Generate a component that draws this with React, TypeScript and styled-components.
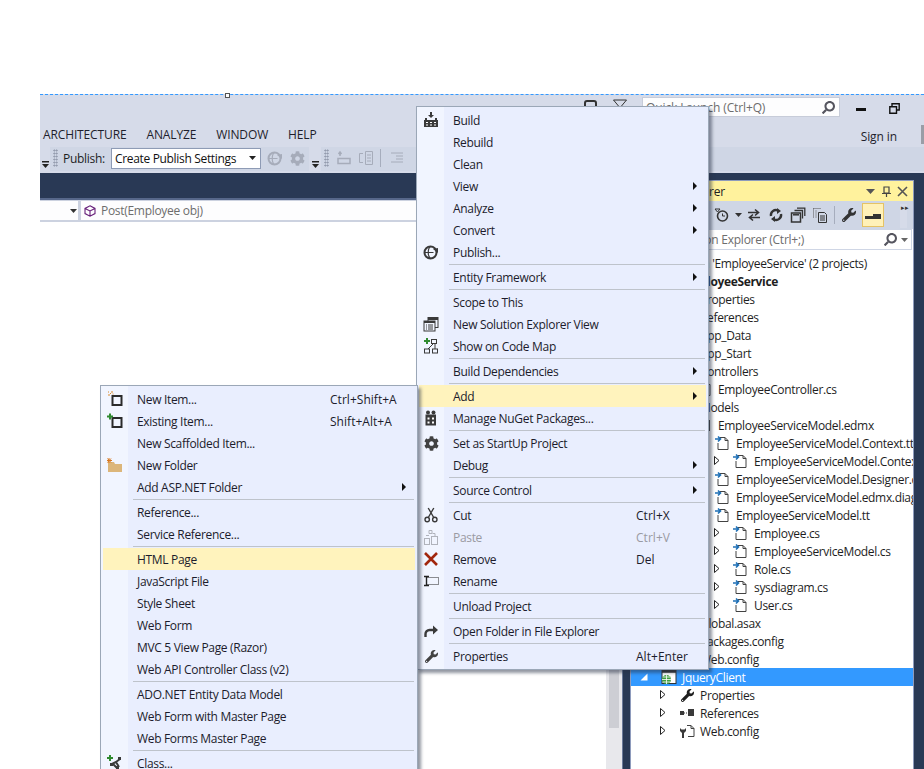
import React from "react";
import styled, { createGlobalStyle } from "styled-components";
import { FaCog, FaWrench, FaSearch } from "react-icons/fa";

const Global = createGlobalStyle`
  html, body { margin: 0; padding: 0; background: #fff; }
  body { font-family: "Open Sans", "Noto Sans", sans-serif; font-size: 12px; color: #1e1e1e; }
`;

const Page = styled.div`
  position: relative;
  width: 924px;
  height: 769px;
  overflow: hidden;
  padding-top: 94px;
  box-sizing: border-box;
`;
const Ide = styled.div`
  position: relative;
  margin-left: 40px;
  height: 674px;
  background: #d6dbe9;
  border-top: 1px dashed #3399ff;
  display: flex;
  flex-direction: column;
`;
const Handle = styled.span`
  position: absolute;
  left: 185px;
  top: -2px;
  width: 3px;
  height: 3px;
  background: #fff;
  border: 1px solid #555;
`;
const TitleRow = styled.div`
  height: 30px;
  display: flex;
  justify-content: flex-end;
  align-items: flex-start;
  padding: 2px 24px 0 0;
  box-sizing: border-box;
  flex: none;
`;
const BellGlyph = styled.span`
  width: 13px;
  height: 12px;
  margin: 3px 16px 0 0;
  box-sizing: border-box;
  border: 2px solid #333;
  border-radius: 3px;
`;
const FilterGlyph = styled.svg`
  width: 14px;
  height: 14px;
  margin: 2px 15px 0 0;
`;
const QuickSearch = styled.div`
  width: 198px;
  height: 20px;
  box-sizing: border-box;
  background: #fdfdfe;
  border: 1px solid #c7ccd9;
  color: #6d6d6d;
  display: flex;
  align-items: center;
  justify-content: space-between;
  padding: 0 4px 0 3px;
  letter-spacing: -0.12px;
`;
const MinGlyph = styled.span`
  width: 10px;
  height: 3px;
  margin: 11px 0 0 16px;
  background: #111;
`;
const RestoreGlyph = styled.svg`
  width: 11px;
  height: 11px;
  margin: 6px 0 0 23px;
`;
const MenuBar = styled.div`
  height: 22px;
  flex: none;
  display: flex;
  align-items: center;
  gap: 20px;
  padding-left: 3px;
  letter-spacing: -0.13px;
  color: #1e1e2c;
`;
const MenuTitle = styled.span`
  margin-bottom: 4px;
`;
const SignIn = styled.span`
  margin-left: auto;
  margin-right: 27px;
  letter-spacing: -0.1px;
`;
const Avatar = styled.span`
  position: absolute;
  right: 0;
  top: 30px;
  width: 3px;
  height: 19px;
  background: #9a9da6;
`;
const ToolBar = styled.div`
  height: 26px;
  flex: none;
  display: flex;
  align-items: flex-start;
`;
const Segment = styled.div<{ $w?: number }>`
  height: 24px;
  box-sizing: border-box;
  padding-bottom: 2px;
  background: #cfd6e5;
  display: flex;
  align-items: center;
  flex: ${(p) => (p.$w ? `0 0 ${p.$w}px` : "1")};
`;
const Overflow = styled.span<{ $w: number }>`
  flex: 0 0 ${(p) => p.$w}px;
  height: 24px;
  display: flex;
  justify-content: center;
  align-items: flex-end;
  padding-bottom: 3px;
  box-sizing: border-box;
`;
const Grip = styled.span`
  flex: none;
  width: 5px;
  height: 18px;
  margin: 0 4px 0 3px;
  background-image: radial-gradient(#8d95a8 0.8px, transparent 0.9px);
  background-size: 2.5px 3px;
`;
const PublishLabel = styled.span`
  margin: 0 6px 0 1px;
  width: 42px;
  white-space: nowrap;
  letter-spacing: -0.3px;
`;
const Combo = styled.div`
  width: 150px;
  height: 21px;
  margin-right: 3px;
  box-sizing: border-box;
  background: #fff;
  border: 1px solid #8e9bb5;
  display: flex;
  align-items: center;
  justify-content: space-between;
  padding: 0 4px 0 3px;
  color: #111;
  letter-spacing: -0.33px;
  white-space: nowrap;
`;
const ToolIcon = styled.span<{ $w?: number; $c?: string }>`
  flex: none;
  width: ${(p) => p.$w ?? 22}px;
  height: 22px;
  display: flex;
  align-items: center;
  justify-content: center;
  color: ${(p) => p.$c ?? "#424242"};
`;
const ToolSep = styled.span`
  flex: none;
  width: 1px;
  height: 18px;
  margin: 0 3px;
  background: #a6adbd;
`;
const Main = styled.div`
  flex: 1;
  min-height: 0;
  display: flex;
  background: #293955;
`;
const EditorColumn = styled.div`
  width: 583px;
  padding-top: 25px;
  display: flex;
  flex-direction: column;
  box-sizing: border-box;
  border-right: 1px solid #6b7a9a;
`;
const NavBar = styled.div`
  flex: none;
  height: 24px;
  box-sizing: border-box;
  border-top: 2px solid #56678a;
  padding: 1px 0 2px;
  background: #ccd2e0;
  display: flex;
  gap: 3px;
`;
const NavBox = styled.div<{ $w?: number }>`
  flex: ${(p) => (p.$w ? `0 0 ${p.$w}px` : "1")};
  background: #fdfdfe;
  display: flex;
  align-items: center;
  color: #6d6d6d;
  letter-spacing: -0.3px;
  justify-content: ${(p) => (p.$w ? "flex-end" : "flex-start")};
  padding: ${(p) => (p.$w ? "0 1px 0 0" : "0 0 0 3px")};
  box-sizing: border-box;
`;
const NavGlyph = styled.svg`
  width: 12px;
  height: 12px;
  margin-right: 5px;
`;
const Editor = styled.div`
  flex: 1;
  display: flex;
  background: #fff;
`;
const EditorArea = styled.div`
  flex: 1;
`;
const ScrollTrack = styled.div`
  flex: 0 0 16px;
  background: #e8e8ec;
  padding: 0 3px;
  box-sizing: border-box;
`;
const ScrollThumb = styled.div`
  height: 506px;
  background: #cdced4;
`;
const Panel = styled.div`
  width: 284px;
  margin: 7px 0 0 7px;
  box-sizing: border-box;
  background: #fff;
  border: solid #8e9bbc;
  border-width: 0 1px;
  display: flex;
  flex-direction: column;
  overflow: hidden;
`;
const PanelTitle = styled.div`
  flex: none;
  height: 21px;
  box-sizing: border-box;
  background: #fff29d;
  border-top: 1px solid #8e9bbc;
  display: flex;
  align-items: center;
  padding-left: 5px;
  letter-spacing: -0.2px;
  color: #1e1e1e;
`;
const TitleText = styled.span`
  flex: 1;
  text-indent: -4px;
  white-space: nowrap;
`;
const TitleGlyph = styled.svg`
  width: 11px;
  height: 11px;
  margin-right: 5px;
  flex: none;
`;
const PanelTools = styled.div`
  flex: none;
  height: 28px;
  background: #cfd6e5;
  display: flex;
  align-items: center;
  padding-left: 80px;
`;
const ActiveTool = styled.span`
  flex: none;
  width: 22px;
  height: 24px;
  margin-left: 2px;
  box-sizing: border-box;
  background: #fff1b8;
  border: 1px solid #e5c365;
  display: flex;
  align-items: center;
  justify-content: center;
`;
const MoreDots = styled.span`
  margin-left: auto;
  align-self: flex-start;
  margin-top: 3px;
  margin-right: 6px;
  font-size: 7px;
  line-height: 8px;
  color: #333;
  background: #d6dbe9;
  padding: 0 1px;
  width: 7px;
  height: 24px;
  box-sizing: border-box;
`;
const PanelSearch = styled.div`
  flex: none;
  height: 21px;
  box-sizing: border-box;
  margin-right: 1px;
  border: 1px solid #cfd6e5;
  display: flex;
  align-items: center;
  color: #6d6d6d;
  padding: 0 3px 0 3px;
  letter-spacing: -0.25px;
  white-space: nowrap;
`;
const PanelSearchText = styled.span`
  flex: 1;
`;
const SearchGap = styled.span`
  width: 4px;
`;
const MirrorSearch = styled(FaSearch)`
  transform: scaleX(-1);
  color: #55555f;
`;
const Tree = styled.div`
  flex: 1;
  padding-top: 4px;
`;
const TreeRow = styled.div<{ $pad: number; $sel?: boolean; $bold?: boolean }>`
  height: 18px;
  box-sizing: border-box;
  display: flex;
  align-items: center;
  white-space: nowrap;
  padding-left: ${(p) => p.$pad}px;
  background: ${(p) => (p.$sel ? "#3399ff" : "transparent")};
  color: ${(p) => (p.$sel ? "#fff" : "#1e1e1e")};
  font-weight: ${(p) => (p.$bold ? 700 : 400)};
  letter-spacing: -0.34px;
`;
const Expander = styled.span`
  flex: none;
  width: 24px;
  height: 18px;
  display: flex;
  align-items: center;
`;
const TreeIcon = styled.span`
  flex: none;
  width: 16px;
  height: 16px;
  margin-right: 5px;
  display: flex;
  align-items: center;
  justify-content: center;
`;

const MenuBox = styled.div<{ $x: number; $y: number; $w: number; $z: number }>`
  position: absolute;
  left: ${(p) => p.$x}px;
  top: ${(p) => p.$y}px;
  width: ${(p) => p.$w}px;
  z-index: ${(p) => p.$z};
  box-sizing: border-box;
  padding: 2px;
  border: 1px solid #9ba7b7;
  background: linear-gradient(to right, #f1f5ff 27px, #e9eefe 27px);
  box-shadow: 3px 3px 3px rgba(40, 50, 70, 0.5);
  color: #1c1c2c;
  letter-spacing: -0.32px;
`;
const MenuRow = styled.div<{ $active?: boolean; $off?: boolean; $short: number }>`
  height: 22px;
  display: grid;
  grid-template-columns: 34px ${(p) => p.$short - 34}px 1fr 13px;
  align-items: center;
  white-space: nowrap;
  background: ${(p) => (p.$active ? "#fff3bd" : "transparent")};
  color: ${(p) => (p.$off ? "#9a9aa2" : "inherit")};
`;
const MenuIcon = styled.span`
  width: 16px;
  height: 16px;
  margin-left: 4px;
  display: flex;
  align-items: center;
  justify-content: center;
  color: #424242;
`;
const Shortcut = styled.span`
  letter-spacing: 0.03px;
`;
const MenuSep = styled.div`
  height: 1px;
  margin: 1px 1px 1px 30px;
  background: #bec3cb;
`;
const Caret = styled.span`
  width: 0;
  height: 0;
  border-left: 4px solid #111;
  border-top: 4px solid transparent;
  border-bottom: 4px solid transparent;
  justify-self: start;
`;

const S16: React.FC<{ children: React.ReactNode }> = ({ children }) => (
  <svg width="16" height="16" viewBox="0 0 16 16" fill="none">{children}</svg>
);

const D = "#3a3a3a";
const icons: Record<string, React.ReactNode> = {
  build: (
    <S16>
      <path d="M8 0v5" stroke={D} strokeWidth="2" />
      <path d="M5 3l3 3 3-3z" fill={D} />
      <path d="M2 6h2v2h8V6h2v2h1v7H1V8h1z" fill={D} />
      <path d="M3 10h2v1H3zM7 10h2v1H7zM11 10h2v1h-2zM3 12.5h2v1H3zM7 12.5h2v1H7zM11 12.5h2v1h-2z" fill="#fff" />
    </S16>
  ),
  publish: (
    <S16>
      <circle cx="7.5" cy="8.5" r="6" stroke={D} strokeWidth="2" />
      <path d="M1.5 8.5h9M7.5 2.5c-3 2-3 10 0 12" stroke={D} strokeWidth="1.2" />
      <path d="M10 5l5-1v5z" fill={D} />
    </S16>
  ),
  view: (
    <S16>
      <rect x="5" y="1.5" width="10" height="10" stroke={D} />
      <path d="M5 3h10" stroke={D} strokeWidth="2" />
      <rect x="1" y="5" width="11" height="10" fill="#f1f5ff" stroke={D} />
      <path d="M1 6h11" stroke={D} strokeWidth="2" />
      <path d="M3 9h1M5 9h5M3 11h1M5 11h5M3 13h1M5 13h5" stroke={D} />
    </S16>
  ),
  map: (
    <S16>
      <path d="M1 3h6M4 0v6" stroke="#2f8a2f" strokeWidth="2" />
      <rect x="8.5" y="1.5" width="5" height="4" stroke={D} />
      <rect x="1.5" y="11" width="5" height="4" stroke={D} />
      <rect x="9.5" y="11" width="5" height="4" stroke={D} />
      <path d="M10 6l-5 5M12 6v5" stroke={D} />
    </S16>
  ),
  nuget: (
    <S16>
      <circle cx="5" cy="2.5" r="2" fill={D} />
      <circle cx="10.5" cy="2.5" r="2" fill={D} />
      <rect x="2.5" y="4.5" width="10.5" height="11" fill={D} />
      <path d="M4.5 7.5h2v2h-2zM9 7.5h2v2H9zM4.5 11.5h2v2h-2zM9 11.5h2v2H9z" fill="#fff" />
    </S16>
  ),
  gear: <FaCog size={15} />,
  cut: (
    <S16>
      <circle cx="4.2" cy="12.5" r="2.2" stroke={D} strokeWidth="1.4" />
      <circle cx="11.8" cy="12.5" r="2.2" stroke={D} strokeWidth="1.4" />
      <path d="M5.3 10.5 10.8 1M10.7 10.5 5.2 1" stroke={D} strokeWidth="1.4" />
    </S16>
  ),
  paste: (
    <S16>
      <path d="M3 6.5h3M6 1.5h3v3H6zM9.5 4.5H12v3" stroke="#b0b3bb" />
      <rect x="1.5" y="9.5" width="5" height="6" stroke="#b0b3bb" />
      <rect x="8.5" y="7.5" width="6" height="8" stroke="#b0b3bb" />
    </S16>
  ),
  remove: (
    <S16>
      <path d="M2 2l12 12M14 2 2 14" stroke="#a1260d" strokeWidth="2.6" />
    </S16>
  ),
  rename: (
    <S16>
      <rect x="3.5" y="4.5" width="12" height="7" stroke="#222" strokeDasharray="1 1" />
      <path d="M1 3.5h5M1 12.5h5M3.5 3.5v9" stroke="#222" strokeWidth="1.4" />
    </S16>
  ),
  open: (
    <S16>
      <path d="M2.5 14v-3a4 4 0 0 1 4-4H11" stroke={D} strokeWidth="2.4" />
      <path d="M10 2.5 15 7l-5 4.5z" fill={D} />
    </S16>
  ),
  wrench: <FaWrench size={13} />,
  newItem: (
    <S16>
      <rect x="5.5" y="5" width="9" height="9" stroke="#2b2b2b" strokeWidth="2" />
      <path d="M1 1h1M4 1h2M1 4h2M3 2.5h1M5.5 3h1" stroke="#d98a2b" strokeWidth="1.2" />
    </S16>
  ),
  existing: (
    <S16>
      <rect x="5.5" y="5" width="9" height="9" stroke="#2b2b2b" strokeWidth="2" />
      <path d="M0 3.5h6M3 .5v6" stroke="#2f8a2f" strokeWidth="2" />
    </S16>
  ),
  newFolder: (
    <S16>
      <path d="M1 5h6l1 2h7v8H1z" fill="#dcb67a" />
      <path d="M2 1v5M0 3.5h5M.5 1.5l3.5 4M4 1.5.5 5.5" stroke="#d9781f" strokeWidth="1" />
    </S16>
  ),
  classItem: (
    <S16>
      <path d="M0 3h6M3 0v6" stroke="#2f8a2f" strokeWidth="2" />
      <path d="M5 9l4-2 4-3M6 9l4 4M9 7l3 5" stroke={D} strokeWidth="2" />
      <path d="M3 8h3v3H3zM11 2h3v3h-3zM9 11h3v3H9z" fill={D} />
    </S16>
  ),
  file: (
    <S16>
      <path d="M5 2.5h5l3 3v9H3V8" fill="#fff" stroke="#424242" />
      <path d="M10 2.5v3h3" stroke="#424242" />
      <path d="M0 4h5M3 1.5 5.5 4 3 6.5" stroke="#1e6fb5" strokeWidth="1.6" />
    </S16>
  ),
  cs: (
    <S16>
      <path d="M3 3l3 3M3 6l3-3M4.5 1.5v6M2.5 4.5h5" stroke="#3d7a3d" />
      <path d="M4 8v6.5h9v-11H8" stroke="#424242" />
    </S16>
  ),
  edmx: (
    <S16>
      <path d="M3 3h10v11H3z" fill="#424242" />
      <path d="M5 1h6v3H5z" fill="#424242" />
      <path d="M5 6h6v1H5z" fill="#bbb" />
    </S16>
  ),
  folder: (
    <S16>
      <path d="M1 3h6l1 2h7v9H1z" fill="#dcb67a" />
    </S16>
  ),
  web: (
    <S16>
      <rect x="1" y="1.5" width="14" height="13" fill="#fff" stroke="#333" />
      <path d="M1 2.5h14" stroke="#333" strokeWidth="2.5" />
      <circle cx="5.5" cy="10.5" r="4.5" fill="#3f9d3f" />
      <path d="M1 10.5h9M5.5 6v9M2 8h7M2 13h7" stroke="#fff" strokeWidth=".8" />
    </S16>
  ),
  refs: (
    <S16>
      <rect x="1" y="6" width="4" height="4" fill={D} />
      <rect x="9" y="4" width="6" height="7" fill={D} />
      <path d="M5 8h4" stroke={D} strokeDasharray="1 1" />
    </S16>
  ),
  config: (
    <S16>
      <path d="M8 2.5h4l3 3v8H9" fill="#fff" stroke="#424242" />
      <path d="M12 2.5v3h3" stroke="#424242" />
      <path d="M1 5v3l2 2v5h2v-5l2-2V5L5.5 6.5h-3z" fill={D} />
    </S16>
  ),
};

type M = { t?: string; i?: string; s?: string; sub?: boolean; active?: boolean; off?: boolean; sep?: boolean };

const Menu: React.FC<{ x: number; y: number; w: number; z: number; short: number; items: M[] }> = ({ x, y, w, z, short, items }) => (
  <MenuBox $x={x} $y={y} $w={w} $z={z}>
    {items.map((m, k) =>
      m.sep ? (
        <MenuSep key={k} />
      ) : (
        <MenuRow key={k} $active={m.active} $off={m.off} $short={short}>
          <MenuIcon>{m.i ? icons[m.i] : null}</MenuIcon>
          <span>{m.t}</span>
          <Shortcut>{m.s}</Shortcut>
          {m.sub ? <Caret /> : <span />}
        </MenuRow>
      )
    )}
  </MenuBox>
);

const rightMenu: M[] = [
  { t: "Build", i: "build" }, { t: "Rebuild" }, { t: "Clean" },
  { t: "View", sub: true }, { t: "Analyze", sub: true }, { t: "Convert", sub: true },
  { t: "Publish...", i: "publish" }, { sep: true },
  { t: "Entity Framework", sub: true }, { sep: true },
  { t: "Scope to This" }, { t: "New Solution Explorer View", i: "view" }, { t: "Show on Code Map", i: "map" }, { sep: true },
  { t: "Build Dependencies", sub: true }, { sep: true },
  { t: "Add", sub: true, active: true }, { t: "Manage NuGet Packages...", i: "nuget" }, { sep: true },
  { t: "Set as StartUp Project", i: "gear" }, { t: "Debug", sub: true }, { sep: true },
  { t: "Source Control", sub: true }, { sep: true },
  { t: "Cut", i: "cut", s: "Ctrl+X" }, { t: "Paste", i: "paste", s: "Ctrl+V", off: true }, { t: "Remove", i: "remove", s: "Del" }, { t: "Rename", i: "rename" }, { sep: true },
  { t: "Unload Project" }, { sep: true },
  { t: "Open Folder in File Explorer", i: "open" }, { sep: true },
  { t: "Properties", i: "wrench", s: "Alt+Enter" },
];

const leftMenu: M[] = [
  { t: "New Item...", i: "newItem", s: "Ctrl+Shift+A" }, { t: "Existing Item...", i: "existing", s: "Shift+Alt+A" },
  { t: "New Scaffolded Item..." }, { t: "New Folder", i: "newFolder" }, { t: "Add ASP.NET Folder", sub: true }, { sep: true },
  { t: "Reference..." }, { t: "Service Reference..." }, { sep: true },
  { t: "HTML Page", active: true }, { t: "JavaScript File" }, { t: "Style Sheet" }, { t: "Web Form" },
  { t: "MVC 5 View Page (Razor)" }, { t: "Web API Controller Class (v2)" }, { sep: true },
  { t: "ADO.NET Entity Data Model" }, { t: "Web Form with Master Page" }, { t: "Web Forms Master Page" }, { sep: true },
  { t: "Class...", i: "classItem" },
];

type R = { t: string; d: number; i?: string; e?: "open" | "closed" };
const tree: R[] = [
  { t: "EmployeeService", d: 0, i: "web", e: "open" },
  { t: "Properties", d: 1, i: "wrench", e: "closed" },
  { t: "References", d: 1, i: "refs", e: "closed" },
  { t: "App_Data", d: 1, i: "folder" },
  { t: "App_Start", d: 1, i: "folder", e: "closed" },
  { t: "Controllers", d: 1, i: "folder", e: "open" },
  { t: "EmployeeController.cs", d: 2, i: "cs", e: "closed" },
  { t: "Models", d: 1, i: "folder", e: "open" },
  { t: "EmployeeServiceModel.edmx", d: 2, i: "edmx", e: "open" },
  { t: "EmployeeServiceModel.Context.tt", d: 3, i: "file", e: "open" },
  { t: "EmployeeServiceModel.Context.cs", d: 4, i: "file", e: "closed" },
  { t: "EmployeeServiceModel.Designer.cs", d: 3, i: "file" },
  { t: "EmployeeServiceModel.edmx.diagram", d: 3, i: "file" },
  { t: "EmployeeServiceModel.tt", d: 3, i: "file", e: "open" },
  { t: "Employee.cs", d: 4, i: "file", e: "closed" },
  { t: "EmployeeServiceModel.cs", d: 4, i: "file", e: "closed" },
  { t: "Role.cs", d: 4, i: "file", e: "closed" },
  { t: "sysdiagram.cs", d: 4, i: "file", e: "closed" },
  { t: "User.cs", d: 4, i: "file", e: "closed" },
  { t: "Global.asax", d: 1, i: "file", e: "closed" },
  { t: "packages.config", d: 1, i: "config" },
  { t: "Web.config", d: 1, i: "config", e: "closed" },
  { t: "JqueryClient", d: 0, i: "web", e: "open" },
  { t: "Properties", d: 1, i: "wrench", e: "closed" },
  { t: "References", d: 1, i: "refs", e: "closed" },
  { t: "Web.config", d: 1, i: "config", e: "closed" },
];

const ExpandGlyph: React.FC<{ e?: "open" | "closed"; sel?: boolean }> = ({ e, sel }) =>
  e === "closed" ? (
    <svg width="16" height="16" viewBox="0 0 16 16" fill="none"><path d="M5.5 3.5v8l4.5-4z" stroke="#222" fill="#fff" /></svg>
  ) : e === "open" ? (
    <svg width="16" height="16" viewBox="0 0 16 16"><path d="M3.5 11.5h7v-7z" fill={sel ? "#fff" : "#333"} /></svg>
  ) : null;

const DownArrow: React.FC<{ c?: string }> = ({ c = "#333" }) => (
  <svg width="7" height="4" viewBox="0 0 7 4"><path d="M0 0h7L3.5 4z" fill={c} /></svg>
);
const OverflowGlyph = () => (
  <svg width="7" height="7" viewBox="0 0 7 7"><path d="M0 0h7v1.4H0zM0 3h7L3.5 7z" fill="#222" /></svg>
);
const Dim = "#a6acba";

export default function App() {
  return (
    <Page>
      <Global />
      <Ide>
        <Handle />
        <Avatar />
        <TitleRow>
          <BellGlyph />
          <FilterGlyph viewBox="0 0 14 14" fill="none"><path d="M.5 1h13L8.5 7v6l-3-2V7z" stroke="#333" /></FilterGlyph>
          <QuickSearch>
            <span>Quick Launch (Ctrl+Q)</span>
            <MirrorSearch size={13} />
          </QuickSearch>
          <MinGlyph />
          <RestoreGlyph viewBox="0 0 11 11" fill="none"><path d="M3 3V.8h7.2V7H7.5M.8 3.8h6.7V10.2H.8z" stroke="#111" strokeWidth="1.4" /></RestoreGlyph>
        </TitleRow>
        <MenuBar>
          <MenuTitle>ARCHITECTURE</MenuTitle>
          <MenuTitle>ANALYZE</MenuTitle>
          <MenuTitle>WINDOW</MenuTitle>
          <MenuTitle>HELP</MenuTitle>
          <SignIn>Sign in</SignIn>
        </MenuBar>
        <ToolBar>
          <Overflow $w={10}><OverflowGlyph /></Overflow>
          <Segment $w={259}>
            <Grip />
            <PublishLabel>Publish:</PublishLabel>
            <Combo>
              <span>Create Publish Settings</span>
              <DownArrow c="#222" />
            </Combo>
            <ToolIcon $c={Dim}>
              <svg width="16" height="16" viewBox="0 0 16 16" fill="none">
                <circle cx="7.5" cy="8.5" r="6" stroke={Dim} strokeWidth="2" />
                <path d="M1.5 8.5h9M7.5 2.5c-3 2-3 10 0 12" stroke={Dim} strokeWidth="1.2" />
                <path d="M10 5l5-1v5z" fill={Dim} />
              </svg>
            </ToolIcon>
            <ToolIcon $c={Dim}><FaCog size={15} /></ToolIcon>
          </Segment>
          <Overflow $w={12}><OverflowGlyph /></Overflow>
          <Segment>
            <Grip />
            <ToolIcon>
              <svg width="16" height="16" viewBox="0 0 16 16" fill="none"><path d="M4 3v3M2.5 4 4 2l1.5 2M2 8.5h12v5H2z" stroke={Dim} strokeWidth="1.5" /></svg>
            </ToolIcon>
            <ToolIcon>
              <svg width="16" height="16" viewBox="0 0 16 16" fill="none"><path d="M7.5 1.5h7v13h-7zM9 5h4M9 8h4M9 11h4M5 3.5H1.5v9H5" stroke={Dim} /></svg>
            </ToolIcon>
            <ToolSep />
            <ToolIcon $w={26}>
              <svg width="16" height="16" viewBox="0 0 16 16" fill="none"><path d="M2 3h12M7 6h7M7 9h7M2 12h12" stroke={Dim} /></svg>
            </ToolIcon>
            <ToolIcon>
              <svg width="16" height="16" viewBox="0 0 16 16" fill="none"><path d="M3 3.5h7l-3 4 2 4" stroke={Dim} strokeWidth="1.4" /></svg>
            </ToolIcon>
          </Segment>
        </ToolBar>
        <Main>
          <EditorColumn>
            <NavBar>
              <NavBox $w={38}><DownArrow /></NavBox>
              <NavBox>
                <NavGlyph viewBox="0 0 12 12" fill="none"><path d="M6 .8 11 3.4v5.2L6 11.2 1 8.6V3.4zM1 3.4 6 6l5-2.6M6 6v5.2" stroke="#68217a" strokeWidth="1.1" /></NavGlyph>
                Post(Employee obj)
              </NavBox>
            </NavBar>
            <Editor>
              <EditorArea />
              <ScrollTrack><ScrollThumb /></ScrollTrack>
            </Editor>
          </EditorColumn>
          <Panel>
            <PanelTitle>
              <TitleText>Solution Explorer</TitleText>
              <TitleGlyph viewBox="0 0 11 11"><path d="M1 3h9L5.5 8z" fill="#555" /></TitleGlyph>
              <TitleGlyph viewBox="0 0 11 11" fill="none"><path d="M3 1h5v6H3zM1 7.5h9M5.5 8v3" stroke="#444" strokeWidth="1.2" /></TitleGlyph>
              <TitleGlyph viewBox="0 0 11 11" fill="none"><path d="M1 1l9 9M10 1l-9 9" stroke="#555" strokeWidth="1.6" /></TitleGlyph>
            </PanelTitle>
            <PanelTools>
              <ToolIcon>
                <svg width="16" height="16" viewBox="0 0 16 16" fill="none"><circle cx="8.5" cy="9" r="5" stroke="#333" strokeWidth="1.6" /><path d="M8.5 6.5V9H11M1 2h5L3.5 5z" stroke="#333" /></svg>
              </ToolIcon>
              <ToolIcon $w={10}><DownArrow /></ToolIcon>
              <ToolIcon>
                <svg width="16" height="16" viewBox="0 0 16 16" fill="none"><path d="M2 5.5h10M9 2.5l3.5 3-3.5 3M14 10.5H4M7 7.5l-3.5 3 3.5 3" stroke="#333" strokeWidth="1.6" /></svg>
              </ToolIcon>
              <ToolIcon>
                <svg width="16" height="16" viewBox="0 0 16 16" fill="none"><path d="M3 9a5 5 0 0 1 7-5.5M13 7a5 5 0 0 1-7 5.5" stroke="#333" strokeWidth="2.4" /><path d="M9 1l4 3-4 3zM7 15l-4-3 4-3z" fill="#333" /></svg>
              </ToolIcon>
              <ToolIcon>
                <svg width="16" height="16" viewBox="0 0 16 16" fill="none"><rect x="1.5" y="6" width="9" height="9" stroke="#333" strokeWidth="1.5" /><path d="M3 7.8h6" stroke="#333" strokeWidth="1.5" /><path d="M4.5 3.5h8v8M7 1.2h7.8V9" stroke="#333" strokeWidth="1.3" /></svg>
              </ToolIcon>
              <ToolIcon>
                <svg width="16" height="16" viewBox="0 0 16 16" fill="none"><path d="M6.5 5.5h6l2 2v8h-8zM8 9h5M8 11h5M8 13h5" stroke="#333" /><path d="M1.5 1.5h7M1.5 1.5v9M4 3.5v8" stroke="#555" strokeDasharray="1 1" /></svg>
              </ToolIcon>
              <ToolSep />
              <ToolIcon $c="#333"><FaWrench size={14} /></ToolIcon>
              <ActiveTool>
                <svg width="16" height="8" viewBox="0 0 16 8"><path d="M0 5h8V3h8v5H0z" fill="#333" /></svg>
              </ActiveTool>
              <MoreDots>▸▸</MoreDots>
            </PanelTools>
            <PanelSearch>
              <PanelSearchText>Search Solution Explorer (Ctrl+;)</PanelSearchText>
              <MirrorSearch size={13} />
              <SearchGap />
              <DownArrow c="#666" />
            </PanelSearch>
            <Tree>
              <TreeRow $pad={35}>Solution 'EmployeeService' (2 projects)</TreeRow>
              {tree.map((r, k) => {
                const sel = r.t === "JqueryClient";
                return (
                  <TreeRow key={k} $pad={6 + r.d * 18} $sel={sel} $bold={k === 0}>
                    <Expander><ExpandGlyph e={r.e} sel={sel} /></Expander>
                    <TreeIcon>{r.i ? icons[r.i] : null}</TreeIcon>
                    <span>{r.t}</span>
                  </TreeRow>
                );
              })}
            </Tree>
          </Panel>
        </Main>
      </Ide>
      <Menu x={416} y={106} w={293} z={2} short={217} items={rightMenu} />
      <Menu x={100} y={385} w={318} z={3} short={227} items={leftMenu} />
    </Page>
  );
}
